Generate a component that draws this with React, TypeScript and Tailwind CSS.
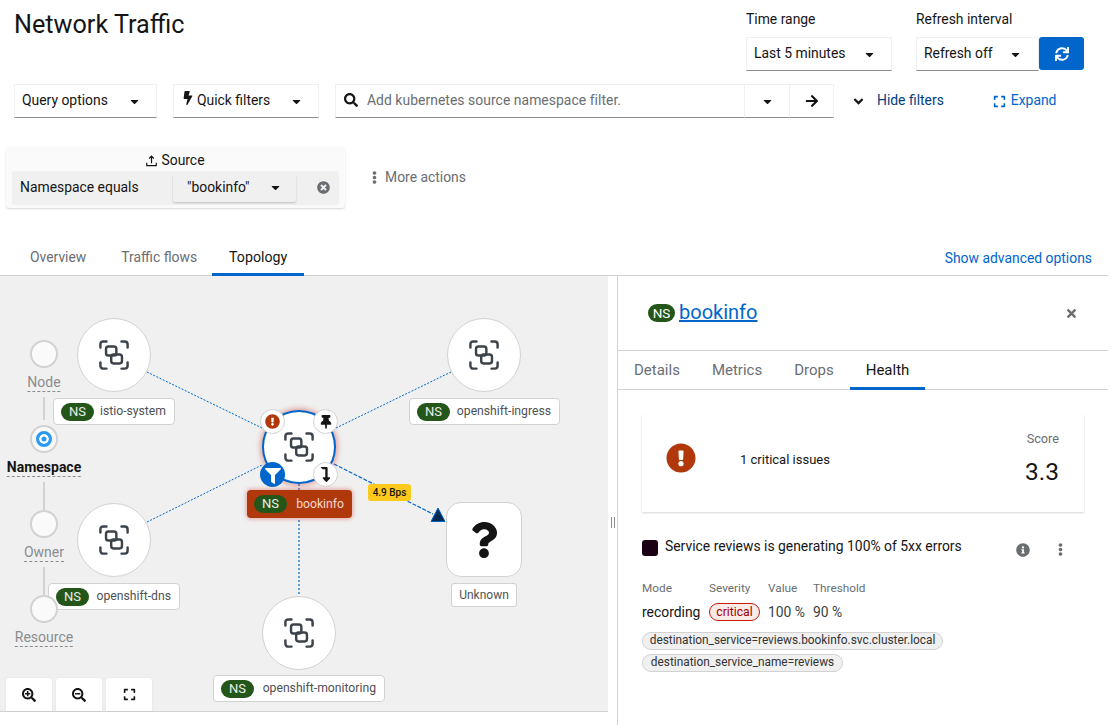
import React from "react";
import {
  FaCaretDown, FaSearch, FaArrowRight, FaAngleDown, FaExpand, FaSync, FaBolt, FaTimesCircle,
  FaEllipsisV, FaExclamationCircle, FaThumbtack, FaFilter, FaLevelDownAlt, FaQuestion,
  FaInfoCircle, FaTimes, FaSearchPlus, FaSearchMinus,
} from "react-icons/fa";

const ProjectIcon = ({ className }: { className?: string }) => (
  <svg viewBox="0 0 32 32" className={className} fill="none" stroke="#3c434b" strokeWidth="2.600" strokeLinecap="round">
    <path d="M1.500 8V4.500a3 3 0 0 1 3-3H8M24 1.500h3.500a3 3 0 0 1 3 3V8M30.500 24v3.500a3 3 0 0 1-3 3H24M8 30.500H4.500a3 3 0 0 1-3-3V24" />
    <rect x="7.500" y="7" width="11" height="9.500" rx="2.500" />
    <rect x="13" y="15.500" width="11.500" height="9.500" rx="2.500" />
  </svg>
);

const Select = ({ children, w, caretClass = "" }: { children: React.ReactNode; w: string; caretClass?: string }) => (
  <div className={`${w} h-[34px] flex items-center justify-between pl-[7px] pr-[15px] border border-[#f0f0f0] border-b-[#8a8d90] text-[13.900px] text-[#151515]`}>
    <span className="flex items-center gap-[2px] mb-[2px]">{children}</span>
    <FaCaretDown className={`text-[13px] text-[#151515] ${caretClass}`} />
  </div>
);

const NS = () => (
  <span className="w-[33px] h-[18px] rounded-full bg-[#24561a] text-[#e8efe6] text-[13px] flex items-center justify-center shrink-0">NS</span>
);

const Label = ({ text, cls }: { text: string; cls: string }) => (
  <div className={`absolute flex items-center justify-between pl-[7px] pr-2 rounded-[4px] bg-white border border-[#d2d2d2] text-[12.200px] text-[#4f5255] ${cls}`}>
    <NS />
    <span>{text}</span>
  </div>
);

const Circle = ({ cls }: { cls: string }) => (
  <div className={`absolute w-[74px] h-[74px] rounded-full bg-white border border-[#d2d2d2] flex items-center justify-center ${cls}`}>
    <ProjectIcon className="w-[30px] h-[30px]" />
  </div>
);

const Level = ({ cls, active }: { cls: string; active?: boolean }) => (
  <div className={`absolute w-[28px] h-[28px] rounded-full bg-[#fafafa] border-2 border-[#d2d2d2] flex items-center justify-center ${cls}`}>
    {active && <div className="w-[16px] h-[16px] rounded-full bg-[#2b9af3] border-[3px] border-[#2b9af3] shadow-[inset_0_0_0_2.500px_#fff]" />}
  </div>
);

const LevelText = ({ text, cls, active }: { text: string; cls: string; active?: boolean }) => (
  <div className={`absolute -translate-x-1/2 left-[44px] leading-[17px] border-b border-dashed border-[#8a8d90] whitespace-nowrap text-[14px] ${active ? "font-bold text-[#151515]" : "text-[#8a8d90]"} ${cls}`}>{text}</div>
);

const Deco = ({ cls, children }: { cls: string; children: React.ReactNode }) => (
  <div className={`absolute w-[25px] h-[25px] rounded-full bg-white border border-[#d2d2d2] flex items-center justify-center ${cls}`}>{children}</div>
);

const ZoomBtn = ({ children }: { children: React.ReactNode }) => (
  <div className="w-[46px] h-[33px] bg-white rounded-t-[3px] shadow-[0_0_2px_rgba(0,0,0,0.1)] flex items-center justify-center text-[#151515]">{children}</div>
);

export default function App() {
  return (
    <div className="w-[1111px] h-[725px] overflow-hidden bg-white flex flex-col font-['Roboto',sans-serif] text-[#151515]">
      {/* header */}
      <div className="h-[84px] flex justify-between shrink-0">
        <h1 className="pl-[14px] pt-[7px] text-[25.200px] leading-[36px]">Network Traffic</h1>
        <div className="flex pt-[10px] pr-[27px] text-[13.900px]">
          <div className="w-[170px]">
            <div className="leading-[18px] h-[27px]">Time range</div>
            <Select w="w-[146px]">Last 5 minutes</Select>
          </div>
          <div>
            <div className="leading-[18px] h-[27px]">Refresh interval</div>
            <div className="flex">
              <Select w="w-[123px]" caretClass="mr-[1px]">Refresh off</Select>
              <div className="w-[45px] h-[33px] bg-[#0066cc] rounded-[3px] flex items-center justify-center text-white"><FaSync className="text-[14px]" /></div>
            </div>
          </div>
        </div>
      </div>

      {/* query row */}
      <div className="h-[34px] flex items-center pl-[14px] shrink-0 text-[13.900px]">
        <Select w="w-[143px]">Query options</Select>
        <div className="w-[16px]" />
        <Select w="w-[146px]"><FaBolt className="text-[14px] -mt-1" />Quick filters</Select>
        <div className="w-[16px]" />
        <div className="w-[410px] h-[34px] flex items-center pl-2 border border-[#f0f0f0] border-b-[#8a8d90]">
          <FaSearch className="text-[14px] text-[#151515] mb-[2px]" />
          <span className="ml-[9px] text-[#6a6e73] flex-1 mb-[2px] tracking-[0.05px]">Add kubernetes source namespace filter.</span>
        </div>
        <div className="w-[45px] h-[34px] flex items-center justify-center border-t border-r border-[#f0f0f0] border-b border-b-[#8a8d90]"><FaCaretDown className="text-[13px]" /></div>
        <div className="w-[44px] h-[34px] flex items-center justify-center border-t border-r border-[#f0f0f0] border-b border-b-[#8a8d90]"><FaArrowRight className="text-[14px]" /></div>
        <FaAngleDown className="ml-[17px] text-[15px] text-[#151515]" />
        <span className="ml-[11px] mb-[2px] text-[#004080]">Hide filters</span>
        <FaExpand className="ml-[49px] text-[13px] text-[#0066cc]" />
        <span className="ml-[5px] mb-[2px] text-[#0066cc]">Expand</span>
      </div>

      {/* filters */}
      <div className="h-[122px] pt-[29px] pl-[6px] flex shrink-0 text-[13.900px]">
        <div className="w-[339px] h-[61px] rounded-[3px] bg-[#fafafa] shadow-[0_1px_2px_rgba(0,0,0,0.16)] px-[6px] flex flex-col">
          <div className="h-[24px] flex items-center justify-center gap-1 pt-[3px] text-[#151515]">
            <svg viewBox="0 0 12 13" className="w-[11px] h-[12px]" fill="none" stroke="#151515" strokeWidth="1.300"><path d="M6 9V1.500M3.500 3.800 6 1.200l2.500 2.600M.8 8.500v3h10.400v-3" /></svg>
            Source
          </div>
          <div className="h-[33px] rounded-[3px] bg-[#f0f0f0] flex items-center pl-2 pr-[7px] shadow-[0_1px_1px_rgba(0,0,0,0.05)]">
            <span className="w-[153px]">Namespace equals</span>
            <div className="w-[123px] h-[28px] bg-[#f0f0f0] shadow-[0_1px_2px_rgba(0,0,0,0.2)] flex items-center justify-between pl-[14px] pr-[14px] rounded-[2px]">
              <span>"bookinfo"</span>
              <FaCaretDown className="text-[13px]" />
            </div>
            <FaTimesCircle className="ml-auto mr-[2px] text-[13px] text-[#6a6e73]" />
          </div>
        </div>
        <div className="ml-[23px] flex items-center h-[61px] text-[#6a6e73]">
          <FaEllipsisV className="text-[13px]" />
          <span className="ml-[4px]">More actions</span>
        </div>
      </div>

      {/* tabs */}
      <div className="h-[36px] flex justify-between items-stretch border-b border-[#d2d2d2] w-[1108px] shrink-0 text-[13.900px]">
        <div className="flex pl-[14px]">
          <div className="pl-[16px] pr-[19px] flex items-center text-[#6a6e73]">Overview</div>
          <div className="pl-[16px] pr-[15px] flex items-center text-[#6a6e73]">Traffic flows</div>
          <div className="px-[17px] flex items-center text-[14.200px] text-[#151515] border-b-[3px] border-[#0066cc] -mb-[1px] pt-[3px]">Topology</div>
        </div>
        <div className="pr-[16px] pt-[2px] flex items-center text-[#0066cc]">Show advanced options</div>
      </div>

      {/* body */}
      <div className="flex-1 flex w-[1108px] min-h-0">
        {/* canvas */}
        <div className="w-[608px] h-[436px] relative bg-[#f0f0f0] border-b border-[#d2d2d2] shrink-0 text-[#151515]">
          <svg className="absolute inset-0" width="608" height="435" fill="none">
            <g stroke="#0066cc" strokeWidth="1" strokeDasharray="2 1.500">
              <line x1="147" y1="96" x2="262" y2="152" />
              <line x1="147" y1="246" x2="262" y2="189" />
              <line x1="336" y1="152" x2="451" y2="96" />
            </g>
            <line x1="299" y1="208" x2="299" y2="320" stroke="#5a9fe0" strokeWidth="2" strokeDasharray="2 2" />
            <line x1="334" y1="188" x2="433" y2="238" stroke="#0066cc" strokeWidth="1.200" strokeDasharray="4 1.500" />
            <polygon points="438,232 431,245.500 445,245.500" fill="#002952" stroke="#0066cc" strokeWidth="1" />
            <line x1="44" y1="121" x2="44" y2="144" stroke="#d2d2d2" strokeWidth="2" />
            <line x1="44" y1="206" x2="44" y2="234" stroke="#d2d2d2" strokeWidth="2" />
            <line x1="44" y1="291" x2="44" y2="319" stroke="#d2d2d2" strokeWidth="2" />
          </svg>

          <Level cls="left-[30px] top-[64px]" />
          <Level cls="left-[30px] top-[149px]" active />
          <Level cls="left-[30px] top-[234px]" />
          <LevelText text="Node" cls="top-[98px]" />
          <LevelText text="Namespace" cls="top-[183px]" active />
          <LevelText text="Owner" cls="top-[268px]" />
          <LevelText text="Resource" cls="top-[353px]" />

          <Circle cls="left-[77px] top-[42px]" />
          <Circle cls="left-[447px] top-[42px]" />
          <Circle cls="left-[77px] top-[227px]" />
          <Circle cls="left-[262px] top-[320px]" />

          <Label text="istio-system" cls="left-[53px] top-[122px] w-[122px] h-[27px]" />
          <Label text="openshift-ingress" cls="left-[409px] top-[122px] w-[151px] h-[27px]" />
          <Label text="openshift-dns" cls="left-[48px] top-[307px] w-[132px] h-[27px]" />
          <Label text="openshift-monitoring" cls="left-[213px] top-[399px] w-[172px] h-[27px]" />

          <Level cls="left-[30px] top-[319px]" />

          {/* bookinfo */}
          <div className="absolute left-[262px] top-[134px] w-[74px] h-[74px] rounded-full bg-white border-2 border-[#0066cc] shadow-[0_0_5px_2px_rgba(201,25,11,0.35)] flex items-center justify-center">
            <ProjectIcon className="w-[30px] h-[30px]" />
          </div>
          <Deco cls="left-[260px] top-[133px]"><FaExclamationCircle className="text-[15px] text-[#b1380b]" /></Deco>
          <Deco cls="left-[313px] top-[133px]"><FaThumbtack className="text-[14px] text-[#151515]" /></Deco>
          <Deco cls="left-[313px] top-[186px]"><FaLevelDownAlt className="text-[15px] text-[#151515]" /></Deco>
          <div className="absolute left-[260px] top-[186px] w-[25px] h-[25px] rounded-full bg-[#0066cc] flex items-center justify-center"><FaFilter className="text-[16px] text-white mt-[2px]" /></div>
          <div className="absolute left-[247px] top-[214px] w-[105px] h-[28px] rounded-[4px] bg-[#b1380b] shadow-[0_0_4px_1px_rgba(201,25,11,0.35)] flex items-center justify-between pl-[7px] pr-2 text-[12.200px] text-white">
            <NS />
            <span className="text-[#f5d9cf]">bookinfo</span>
          </div>

          {/* edge tag */}
          <div className="absolute left-[368px] top-[208px] w-[43px] h-[17px] rounded-[3px] bg-[#fcc91c] text-[10px] font-medium flex items-center justify-center whitespace-nowrap">4.9 Bps</div>

          {/* unknown */}
          <div className="absolute left-[446px] top-[226px] w-[76px] h-[75px] rounded-[15px] bg-white border border-[#d2d2d2] flex items-center justify-center">
            <FaQuestion className="text-[36px] text-[#151515]" />
          </div>
          <div className="absolute left-[451px] top-[307px] w-[66px] h-[24px] rounded-[3px] bg-white border border-[#d2d2d2] flex items-center justify-center text-[12px] text-[#4f5255]">Unknown</div>

          {/* zoom controls */}
          <div className="absolute left-[6px] bottom-0 flex gap-[4px]">
            <ZoomBtn><FaSearchPlus className="text-[14px]" /></ZoomBtn>
            <ZoomBtn><FaSearchMinus className="text-[14px]" /></ZoomBtn>
            <ZoomBtn><FaExpand className="text-[13px]" /></ZoomBtn>
          </div>
        </div>

        {/* splitter */}
        <div className="w-[10px] h-full flex items-start justify-center shrink-0 border-r border-[#d2d2d2]">
          <div className="mt-[241px] w-[4px] h-[11px] border-x border-[#8a8d90]" />
        </div>

        {/* panel */}
        <div className="flex-1 flex flex-col min-w-0">
          <div className="h-[75px] flex items-center pl-[30px] pr-[30px] border-b border-[#d2d2d2] shrink-0">
            <span className="w-[27px] h-[18px] rounded-full bg-[#24561a] text-white text-[13.500px] flex items-center justify-center">NS</span>
            <a className="ml-[4px] mb-[3px] text-[20px] text-[#0066cc] underline leading-[24px]">bookinfo</a>
            <FaTimes className="ml-auto text-[13px] text-[#6a6e73]" />
          </div>
          <div className="h-[39px] flex border-b border-[#d2d2d2] shrink-0 text-[15px]">
            <div className="px-[16px] flex items-center text-[#6a6e73]">Details</div>
            <div className="px-[16px] flex items-center text-[#6a6e73]">Metrics</div>
            <div className="px-[16px] flex items-center text-[#6a6e73]">Drops</div>
            <div className="px-[16px] flex items-center justify-center text-[#151515] border-b-[3px] border-[#0066cc] -mb-[1px] pt-[2px]">Health</div>
          </div>
          <div className="px-[24px] pt-[24px]">
            <div className="h-[98px] w-[442px] shadow-[0_1px_2px_rgba(0,0,0,0.16)] flex items-center">
              <FaExclamationCircle className="ml-[24px] text-[30px] text-[#b1380b] -mt-[10px]" />
              <span className="ml-[44px] text-[13px] -mt-[7px]">1 critical issues</span>
              <div className="ml-auto pr-[25px] text-right self-start pt-[16px]">
                <div className="text-[12.700px] text-[#6a6e73] leading-[18px]">Score</div>
                <div className="text-[24.500px] leading-[36px] mt-[6px]">3.3</div>
              </div>
            </div>

            <div className="mt-[26px] flex items-start">
              <div className="w-[16px] h-[16px] rounded-[3px] bg-[#1a0014] mt-[2px]" />
              <span className="ml-[7px] text-[13.900px] leading-[17px]">Service reviews is generating 100% of 5xx errors</span>
              <FaInfoCircle className="ml-auto mt-[5px] text-[14px] text-[#6a6e73]" />
              <FaEllipsisV className="ml-[24px] mr-[17px] mt-[5px] text-[13px] text-[#6a6e73]" />
            </div>

            <div className="mt-[23px] grid grid-cols-[67px_59px_45px_1fr] text-[11.800px] text-[#6a6e73] leading-[16px]">
              <span>Mode</span><span>Severity</span><span>Value</span><span>Threshold</span>
            </div>
            <div className="mt-[6px] grid grid-cols-[67px_59px_45px_1fr] items-center text-[13.900px] h-[18px]">
              <span>recording</span>
              <span className="w-[51px] h-[18px] rounded-full bg-[#faeae8] border border-[#c9190b] text-[#a30000] text-[12.200px] flex items-center justify-center">critical</span>
              <span className="text-[#3c3f42]">100 %</span>
              <span className="text-[#3c3f42]">90 %</span>
            </div>
            <div className="mt-[12px] w-[301px] h-[18px] rounded-full bg-[#f0f0f0] border border-[#d2d2d2] flex items-center justify-center text-[11.850px] text-[#333] whitespace-nowrap">destination_service=reviews.bookinfo.svc.cluster.local</div>
            <div className="mt-[4px] w-[201px] h-[18px] rounded-full bg-[#f0f0f0] border border-[#d2d2d2] flex items-center justify-center text-[11.850px] text-[#333] whitespace-nowrap">destination_service_name=reviews</div>
          </div>
        </div>
      </div>
    </div>
  );
}
